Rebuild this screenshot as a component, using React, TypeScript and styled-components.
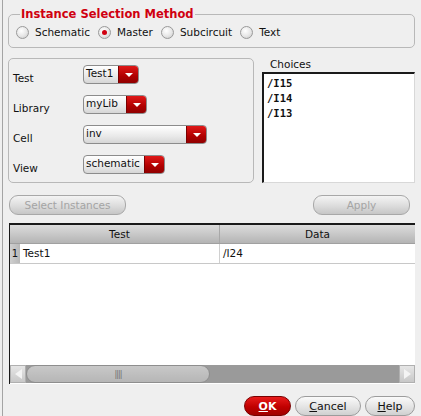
import React from 'react';
import styled, { createGlobalStyle } from 'styled-components';

const GlobalStyle = createGlobalStyle`
  html, body {
    margin: 0;
    padding: 0;
    background: #efefef;
  }
  body {
    font-family: 'DejaVu Sans', 'Liberation Sans', sans-serif;
    font-size: 10.5px;
    color: #111;
  }
`;

const Window = styled.div`
  width: 419px;
  height: 416px;
  margin-left: 2px;
  border-left: 1px solid #a4a4a4;
  box-sizing: border-box;
  padding: 0 6px 0 5px;
  display: flex;
  flex-direction: column;
  background: #efefef;
  overflow: hidden;
`;

const Group = styled.fieldset`
  margin: 7px 0 0 0;
  padding: 2px 6px 6px 7px;
  border: 1px solid #b8b8b8;
  border-radius: 5px;
  min-width: 0;
`;

const Legend = styled.legend`
  color: #d00010;
  font-weight: bold;
  font-size: 11.5px;
  padding: 0 1px;
  margin-left: 4px;
`;

const RadioRow = styled.div`
  display: flex;
  align-items: center;
  gap: 8px;
  height: 18px;
`;

const RadioItem = styled.label`
  display: flex;
  align-items: center;
  gap: 6px;
`;

const RadioDot = styled.span<{ $on?: boolean }>`
  width: 11px;
  height: 11px;
  border-radius: 50%;
  border: 1px solid #9a9a9a;
  background: radial-gradient(circle at 40% 35%, #ffffff 0%, #e6e6e6 55%, #c4c4c4 100%);
  position: relative;
  &::after {
    content: '';
    display: ${(p) => (p.$on ? 'block' : 'none')};
    position: absolute;
    left: 3px;
    top: 3px;
    width: 5px;
    height: 5px;
    border-radius: 50%;
    background: #d00010;
  }
`;

const MiddleRow = styled.div`
  display: flex;
  gap: 8px;
  margin-top: 10px;
  height: 126px;
`;

const FormBox = styled.div`
  width: 246px;
  box-sizing: border-box;
  border: 1px solid #b8b8b8;
  border-radius: 5px;
  padding: 6px 0 0 4px;
  display: flex;
  flex-direction: column;
  gap: 11px;
`;

const FieldRow = styled.div`
  display: flex;
  align-items: center;
  height: 19px;
`;

const FieldLabel = styled.span`
  width: 70px;
  padding-top: 7px;
  font-size: 10.5px;
`;

const Combo = styled.div<{ $w: number }>`
  width: ${(p) => p.$w}px;
  height: 19px;
  box-sizing: border-box;
  border: 1px solid #8c8c8c;
  border-radius: 4px;
  display: flex;
  overflow: hidden;
  background: linear-gradient(#ffffff, #e9e9e9 60%, #d6d6d6);
`;

const ComboText = styled.span`
  flex: 1;
  padding: 0 0 0 2px;
  line-height: 15px;
  font-size: 10.5px;
  white-space: nowrap;
  overflow: hidden;
`;

const ComboArrow = styled.span`
  width: 19px;
  flex: none;
  background: linear-gradient(#e01818, #b00000 60%, #900000);
  border-left: 1px solid #7a0000;
  display: flex;
  align-items: center;
  justify-content: center;
  &::after {
    content: '';
    border-left: 4px solid transparent;
    border-right: 4px solid transparent;
    border-top: 4px solid #ffffff;
    margin-top: 1px;
  }
`;

const ChoicesCol = styled.div`
  flex: 1;
  display: flex;
  flex-direction: column;
`;

const ChoicesLabel = styled.div`
  padding-left: 8px;
  height: 16px;
  line-height: 16px;
  margin-top: -2px;
`;

const ListBox = styled.div`
  flex: 1;
  background: #ffffff;
  border-top: 2px solid #1a1a1a;
  border-left: 2px solid #1a1a1a;
  border-right: 1px solid #d8d8d8;
  border-bottom: 1px solid #d8d8d8;
  padding: 2px 0 0 3px;
  font-family: 'DejaVu Sans Mono', 'Liberation Mono', monospace;
  font-weight: bold;
  font-size: 10.5px;
`;

const ListItem = styled.div`
  height: 15px;
  line-height: 15px;
`;

const ButtonRow = styled.div`
  display: flex;
  justify-content: space-between;
  margin-top: 12px;
  padding: 0 0 0 1px;
`;

const GreyButton = styled.button<{ $w: number; $disabled?: boolean }>`
  width: ${(p) => p.$w}px;
  height: 20px;
  border: 1px solid #a8a8a8;
  border-radius: 9px;
  background: linear-gradient(#f4f4f4, #dcdcdc 55%, #c6c6c6);
  color: ${(p) => (p.$disabled ? '#a4a4a4' : '#111')};
  font-family: 'DejaVu Sans', sans-serif;
  font-size: 10.5px;
  padding: 0;
`;

const ApplyButton = styled(GreyButton)`
  margin-right: 5px;
`;

const Table = styled.div`
  margin-top: 8px;
  margin-left: 1px;
  height: 160px;
  display: flex;
  flex-direction: column;
  background: #ffffff;
  border-top: 2px solid #1a1a1a;
  border-left: 1px solid #1a1a1a;
`;

const HeaderRow = styled.div`
  display: flex;
  height: 18px;
  background: linear-gradient(#dcdcdc, #b4b4b4);
  border-bottom: 1px solid #a0a0a0;
`;

const Corner = styled.div`
  width: 10px;
`;

const HeadCell = styled.div<{ $w: number; $last?: boolean }>`
  width: ${(p) => p.$w}px;
  text-align: center;
  line-height: 18px;
  border-right: ${(p) => (p.$last ? 'none' : '1px solid #a8a8a8')};
  box-sizing: border-box;
`;

const BodyRow = styled.div`
  display: flex;
  height: 19px;
  border-bottom: 1px solid #c8c8c8;
`;

const RowNum = styled.div`
  width: 10px;
  background: linear-gradient(90deg, #cfcfcf, #b8b8b8);
  text-align: center;
  line-height: 20px;
  font-size: 10px;
`;

const Cell = styled.div<{ $w: number; $last?: boolean }>`
  width: ${(p) => p.$w}px;
  box-sizing: border-box;
  padding-left: 3px;
  line-height: 19px;
  font-size: 10.5px;
  border-right: ${(p) => (p.$last ? 'none' : '1px solid #d0d0d0')};
`;

const TableFill = styled.div`
  flex: 1;
`;

const HScroll = styled.div`
  height: 18px;
  display: flex;
  background: #9a9a9a;
  margin-bottom: 1px;
`;

const ScrollArrow = styled.div<{ $dir: 'left' | 'right' }>`
  width: 16px;
  background: linear-gradient(#e6e6e6, #c8c8c8);
  border: 1px solid #b0b0b0;
  box-sizing: border-box;
  display: flex;
  align-items: center;
  justify-content: center;
  &::after {
    content: '';
    border-top: 5px solid transparent;
    border-bottom: 5px solid transparent;
    ${(p) => (p.$dir === 'left' ? 'border-right: 7px solid #f4f4f4;' : 'border-left: 7px solid #f4f4f4;')}
  }
`;

const Thumb = styled.div`
  width: 184px;
  border-radius: 9px;
  background: linear-gradient(#c8c8c8, #b6b6b6);
  border: 1px solid #8e8e8e;
  box-sizing: border-box;
  display: flex;
  align-items: center;
  justify-content: center;
  color: #707070;
  font-size: 8px;
  letter-spacing: -1px;
`;

const Track = styled.div`
  flex: 1;
`;

const Footer = styled.div`
  display: flex;
  justify-content: flex-end;
  gap: 4px;
  margin-top: 12px;
`;

const DialogButton = styled.button<{ $w: number; $primary?: boolean }>`
  width: ${(p) => p.$w}px;
  height: 20px;
  border-radius: 10px;
  padding: 0;
  font-family: 'DejaVu Sans', sans-serif;
  font-size: 11px;
  border: 1px solid ${(p) => (p.$primary ? '#7a0000' : '#9c9c9c')};
  color: ${(p) => (p.$primary ? '#ffffff' : '#111')};
  font-weight: ${(p) => (p.$primary ? 'bold' : 'normal')};
  background: ${(p) =>
    p.$primary
      ? 'linear-gradient(#e81c1c, #c00000 55%, #a00000)'
      : 'linear-gradient(#fafafa, #e4e4e4 55%, #d0d0d0)'};
  u {
    text-decoration-thickness: 1px;
  }
`;

export default function App() {
  const fields = [
    { label: 'Test', value: 'Test1', w: 56 },
    { label: 'Library', value: 'myLib', w: 64 },
    { label: 'Cell', value: 'inv', w: 124 },
    { label: 'View', value: 'schematic', w: 82 },
  ];
  const radios = [
    { label: 'Schematic', on: false },
    { label: 'Master', on: true },
    { label: 'Subcircuit', on: false },
    { label: 'Text', on: false },
  ];

  return (
    <>
      <GlobalStyle />
      <Window>
        <Group>
          <Legend>Instance Selection Method</Legend>
          <RadioRow>
            {radios.map((r) => (
              <RadioItem key={r.label}>
                <RadioDot $on={r.on} />
                {r.label}
              </RadioItem>
            ))}
          </RadioRow>
        </Group>

        <MiddleRow>
          <FormBox>
            {fields.map((f) => (
              <FieldRow key={f.label}>
                <FieldLabel>{f.label}</FieldLabel>
                <Combo $w={f.w}>
                  <ComboText>{f.value}</ComboText>
                  <ComboArrow />
                </Combo>
              </FieldRow>
            ))}
          </FormBox>
          <ChoicesCol>
            <ChoicesLabel>Choices</ChoicesLabel>
            <ListBox>
              <ListItem>/I15</ListItem>
              <ListItem>/I14</ListItem>
              <ListItem>/I13</ListItem>
            </ListBox>
          </ChoicesCol>
        </MiddleRow>

        <ButtonRow>
          <GreyButton $w={117} $disabled>Select Instances</GreyButton>
          <ApplyButton $w={97} $disabled>Apply</ApplyButton>
        </ButtonRow>

        <Table>
          <HeaderRow>
            <Corner />
            <HeadCell $w={201}>Test</HeadCell>
            <HeadCell $w={196} $last>Data</HeadCell>
          </HeaderRow>
          <BodyRow>
            <RowNum>1</RowNum>
            <Cell $w={201}>Test1</Cell>
            <Cell $w={196} $last>/I24</Cell>
          </BodyRow>
          <TableFill />
          <HScroll>
            <ScrollArrow $dir="left" />
            <Thumb>||||</Thumb>
            <Track />
            <ScrollArrow $dir="right" />
          </HScroll>
        </Table>

        <Footer>
          <DialogButton $w={47} $primary>
            <u>O</u>K
          </DialogButton>
          <DialogButton $w={66}>
            <u>C</u>ancel
          </DialogButton>
          <DialogButton $w={50}>
            <u>H</u>elp
          </DialogButton>
        </Footer>
      </Window>
    </>
  );
}
